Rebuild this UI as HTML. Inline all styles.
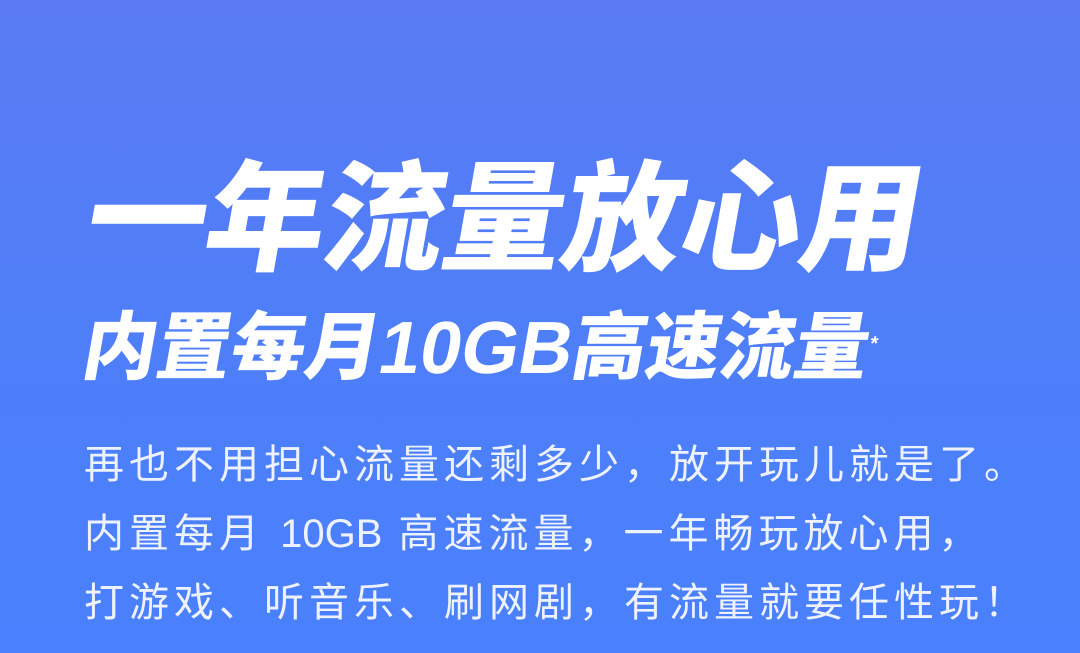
<!DOCTYPE html>
<html><head><meta charset="utf-8"><style>
html,body{margin:0;padding:0}
body{width:1080px;height:653px;overflow:hidden;background:linear-gradient(180deg,#5a7bf3 0%,#4e7ef8 50%,#4a80fd 100%);position:relative;font-family:"Liberation Sans","Noto Sans CJK SC",sans-serif;color:#fff}
.t1{position:absolute;left:88px;top:150px;font-size:120px;font-weight:900;line-height:140px;white-space:nowrap;transform:skewX(-10deg);letter-spacing:-1px}
.t2{position:absolute;left:84px;top:300px;font-size:74px;font-weight:900;line-height:96px;white-space:nowrap;transform:skewX(-10deg)}
.t2 sup{font-size:20px;vertical-align:top;position:relative;top:-4px}
.b{position:absolute;left:84px;top:431px;font-size:40px;line-height:69px;color:#eef2ff;white-space:nowrap;letter-spacing:5px}
.b span{letter-spacing:0}
</style></head><body>
<div class="t1">一年流量放心用</div>
<div class="t2">内置每月10GB高速流量<sup>*</sup></div>
<div class="b">再也不用担心流量还剩多少，放开玩儿就是了。<br>内置每月 <span>10GB</span> 高速流量，一年畅玩放心用，<br>打游戏、听音乐、刷网剧，有流量就要任性玩！</div>
</body></html>
